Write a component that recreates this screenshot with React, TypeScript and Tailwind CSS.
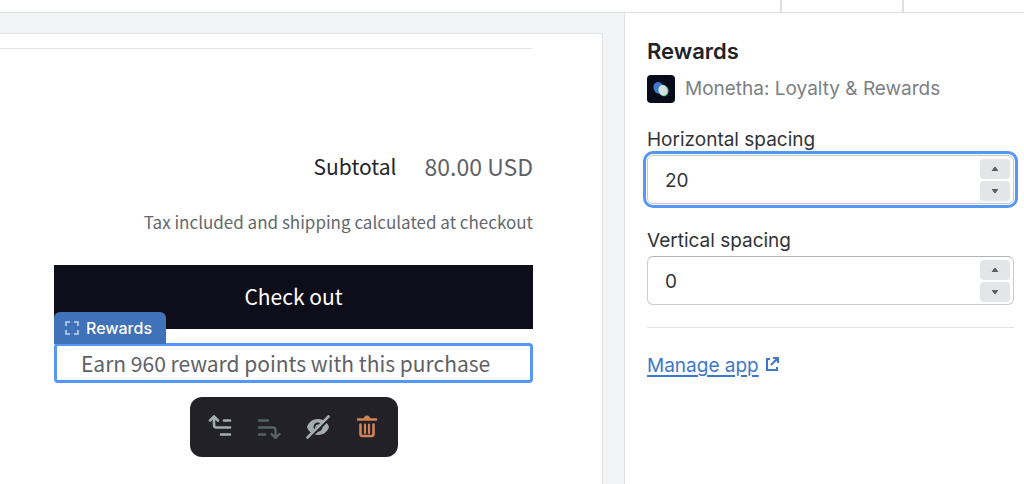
import { useState } from "react";
import clsx from "clsx";

type SpacingFieldProps = {
  id: string;
  label: string;
  initial: number;
  focused?: boolean;
};

function SpacingField({ id, label, initial, focused }: SpacingFieldProps) {
  const [value, setValue] = useState(initial);

  return (
    <div>
      <label htmlFor={id} className="block text-[19px] leading-7 text-[#303338]">
        {label}
      </label>
      <div
        className={clsx(
          "mt-px flex h-[49px] items-center rounded-md border bg-white pr-[3px]",
          focused ? "border-[#c4c8cc] outline-3 outline-offset-1 outline-[#5596f6]" : "border-[#c9cccf] border-t-[#aeb4b9]",
        )}
      >
        <input
          id={id}
          type="text"
          inputMode="numeric"
          value={value}
          onChange={(event) => setValue(Number(event.target.value) || 0)}
          className="min-w-0 flex-1 bg-transparent px-[17px] pt-0.5 text-[19px] leading-7 text-[#303338] outline-none"
        />
        <div className="flex flex-col gap-0.5">
          <button type="button" aria-label={`Increase ${label}`} onClick={() => setValue(value + 1)} className="flex h-5 w-[30px] items-center justify-center rounded-sm bg-[#e4e5e7]">
            <svg viewBox="0 0 8 6" className="h-1.5 w-2" fill="#5c5f62">
              <path d="M3.3 1.1 1 4.2c-.4.5-.1.9.4.9h5.2c.5 0 .8-.4.4-.9L4.7 1.1a.9.9 0 0 0-1.4 0Z" />
            </svg>
          </button>
          <button type="button" aria-label={`Decrease ${label}`} onClick={() => setValue(value - 1)} className="flex h-5 w-[30px] items-center justify-center rounded-sm bg-[#e4e5e7]">
            <svg viewBox="0 0 8 6" className="h-1.5 w-2" fill="#5c5f62">
              <path d="M3.3 4.9 1 1.8C.6 1.3.9.9 1.4.9h5.2c.5 0 .8.4.4.9L4.7 4.9a.9.9 0 0 1-1.4 0Z" />
            </svg>
          </button>
        </div>
      </div>
    </div>
  );
}

function MoveUpIcon() {
  return (
    <svg viewBox="0 0 24 24" className="size-6" fill="none" stroke="#a4acb1" strokeWidth="2.6" strokeLinecap="round" strokeLinejoin="round">
      <path d="M2 5.500 6 1.500l4 4M6 2v8a2.500 2.500 0 0 0 2.500 2.500H22M16 5.500h6M13 19.500h9" />
    </svg>
  );
}

function MoveDownIcon() {
  return (
    <svg viewBox="0 0 24 24" className="size-6" fill="none" stroke="#5b6065" strokeWidth="2.4" strokeLinecap="round" strokeLinejoin="round">
      <path d="M2 5.500h9M2 12.500h14a2.500 2.500 0 0 1 2.500 2.500v7.500M14.500 19l4 4 4-4M2 19.500h6" />
    </svg>
  );
}

function HideIcon() {
  return (
    <svg viewBox="0 0 24 24" className="size-6" fill="none">
      <path fill="#a4acb1" fillRule="evenodd" d="M12 4C5.500 4 2 8.500 1 12c1 3.500 4.500 8 11 8s10-4.500 11-8c-1-3.500-4.500-8-11-8Zm0 3.500a4.500 4.500 0 1 1 0 9 4.500 4.500 0 0 1 0-9Z" />
      <circle cx="12" cy="12" r="2.600" fill="#a4acb1" />
      <path d="M3.500 23.500 24 3" stroke="#212127" strokeWidth="2.400" />
      <path d="M1.500 22.500 22.500 1.500" stroke="#a4acb1" strokeWidth="2.600" strokeLinecap="round" />
    </svg>
  );
}

function TrashIcon() {
  return (
    <svg viewBox="0 0 24 24" className="size-6" fill="none" stroke="#d08355" strokeLinecap="round" strokeLinejoin="round">
      <path strokeWidth="2.600" d="M3 4.500h18M5.500 9.500v9.500a2 2 0 0 0 2 2h9a2 2 0 0 0 2-2V9.500" />
      <path strokeWidth="2.200" d="M10 9.500v8.500M14 9.500v8.500" />
      <path fill="#d08355" strokeWidth="1" d="M9 4c0-2 1.300-3 3-3s3 1 3 3Z" />
    </svg>
  );
}

const tools = [
  { label: "Move up", icon: <MoveUpIcon /> },
  { label: "Move down", icon: <MoveDownIcon />, disabled: true },
  { label: "Hide", icon: <HideIcon /> },
  { label: "Remove", icon: <TrashIcon /> },
];

function CartPreview() {
  return (
    <main className="min-w-0 flex-1 bg-[#f3f4f6] pt-5 pr-[21px]">
      <div className="flex h-full flex-col border-t border-r border-[#e1e3e5] bg-white pt-3.5 pr-[69px] font-['Noto_Sans_CJK_SC','Noto_Sans',sans-serif]">
        <hr className="border-[#e4e6e8]" />
        <div className="ml-[54px] flex flex-col pt-[101px]">
          <div className="flex items-center justify-end gap-7 leading-8">
            <span className="text-[21px] text-[#23252d]">Subtotal</span>
            <span className="text-[23px] text-[#5f6166]">80.00 USD</span>
          </div>
          <p className="mt-[26px] text-right text-[17px] leading-7 whitespace-nowrap text-[#63686e]">
            Tax included and shipping calculated at checkout
          </p>
          <button type="button" className="mt-[29px] h-16 bg-[#0e0e1b] text-[21px] text-white">
            Check out
          </button>
          <div className="relative mt-3.5 rounded-sm border-3 border-[#5596f6] pr-[13px] pl-6">
            <div className="absolute -top-[34px] -left-[3px] flex h-8 items-center gap-1.5 rounded-t-md bg-[#3f72b8] pr-3.5 pl-2.5 font-['Inter',sans-serif] text-base font-medium text-white">
              <svg viewBox="0 0 16 16" className="size-4" fill="none" stroke="#c5d8f2" strokeWidth="1.5">
                <path d="M2 6V2h4M10 2h4v4M14 10v4h-4M6 14H2v-4" />
              </svg>
              Rewards
            </div>
            <p className="text-[21px] leading-[34px] whitespace-nowrap text-[#5f6166]">Earn 960 reward points with this purchase</p>
          </div>
          <div className="mt-3.5 flex h-[60px] w-52 items-center justify-between self-center rounded-xl bg-[#212127] px-[18px]">
            {tools.map((tool) => (
              <button key={tool.label} type="button" aria-label={tool.label} disabled={tool.disabled}>
                {tool.icon}
              </button>
            ))}
          </div>
        </div>
      </div>
    </main>
  );
}

function SettingsPanel() {
  return (
    <aside className="w-[400px] shrink-0 border-l border-[#dfe2e5] bg-white pt-6 pr-2.5 pl-[22px]">
      <h2 className="text-[22px] leading-7 font-semibold text-[#202328]">Rewards</h2>
      <div className="mt-2.5 flex items-center gap-2.5">
        <svg viewBox="0 0 28 28" className="size-7">
          <rect width="28" height="28" rx="4" fill="#080b1a" />
          <ellipse cx="11.500" cy="12.800" rx="5" ry="6" transform="rotate(-20 11.500 12.800)" fill="#4178cf" />
          <ellipse cx="16.500" cy="15.500" rx="5" ry="5.800" transform="rotate(-20 16.500 15.500)" fill="#3bc59a" />
          <ellipse cx="16" cy="15.300" rx="4.400" ry="5.400" transform="rotate(-20 16 15.300)" fill="#d9dedd" />
        </svg>
        <span className="text-[19px] leading-7 text-[#7b8086]">Monetha: Loyalty &amp; Rewards</span>
      </div>
      <div className="mt-[23px] flex flex-col gap-[23px]">
        <SpacingField id="horizontal-spacing" label="Horizontal spacing" initial={20} focused />
        <SpacingField id="vertical-spacing" label="Vertical spacing" initial={0} />
      </div>
      <hr className="mt-[22px] border-[#e1e3e5]" />
      <a href="#manage" className="mt-6 inline-flex items-center gap-1.5 text-[19px] leading-7 text-[#3d78cb]">
        <span className="underline decoration-2 underline-offset-3">Manage app</span>
        <svg viewBox="0 0 16 16" className="mb-1 size-4" fill="none" stroke="currentColor" strokeWidth="2">
          <path d="M5 3H2v11h10v-3M8 2h5v5M13 2 6 9" />
        </svg>
      </a>
    </aside>
  );
}

export default function App() {
  return (
    <div className="flex min-h-screen flex-col bg-white font-['Inter',sans-serif]">
      <header className="flex h-[13px] justify-end border-b border-[#dcdfe2]">
        <div className="w-[122px] border-l-2 border-[#dcdfe2]" />
        <div className="w-[122px] border-l-2 border-[#dcdfe2]" />
      </header>
      <div className="flex flex-1">
        <CartPreview />
        <SettingsPanel />
      </div>
    </div>
  );
}
